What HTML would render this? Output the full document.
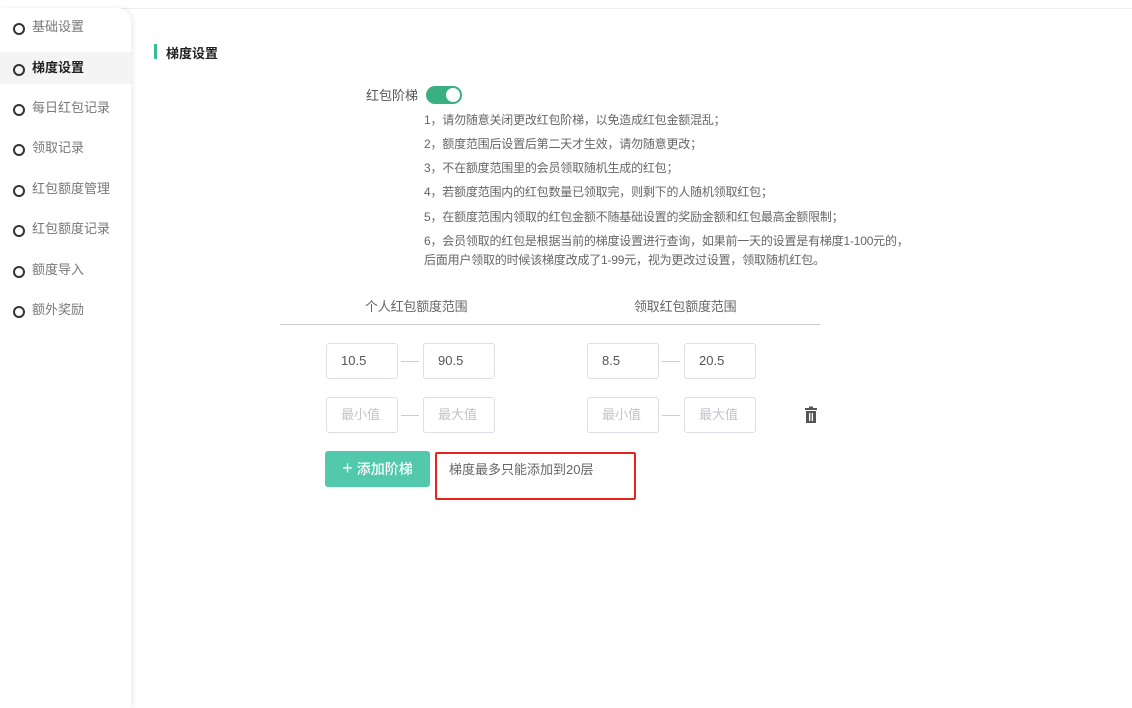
<!DOCTYPE html>
<html><head><meta charset="utf-8"><style>
*{margin:0;padding:0;box-sizing:border-box}
body{width:1132px;height:708px;background:#fff;font-family:"Liberation Sans","Noto Sans CJK SC",sans-serif;position:relative;overflow:hidden;color:#666}
.top{position:absolute;left:0;top:8px;width:1132px;height:1px;background:#eee}
.side{position:absolute;left:0;top:8px;width:131px;height:700px;background:#fff;border-top-right-radius:14px;box-shadow:2px 0 6px rgba(0,0,0,.08)}
.it{position:absolute;left:0;width:131px;height:32px;line-height:32px;font-size:13px;color:#777;padding-left:32px}
.it::before{content:"";position:absolute;left:13px;top:12px;width:8px;height:8px;border:2px solid #333;border-radius:50%}
.it.act{background:#f4f4f4;color:#222;font-weight:bold}
.abs{position:absolute}
.t{position:absolute;font-size:12px;color:#666;white-space:nowrap;letter-spacing:-0.2px}
.inp{position:absolute;width:72px;height:36px;border:1px solid #dcdfe6;border-radius:3px;font-size:13px;color:#555;line-height:34px;padding-left:14px}
.ph{color:#c0c4cc}
.dash{position:absolute;width:18px;height:1px;background:#ccc}
</style></head><body>
<div class="top"></div>
<div class="side">
<div class="it" style="top:3px">基础设置</div>
<div class="it act" style="top:44px">梯度设置</div>
<div class="it" style="top:84px">每日红包记录</div>
<div class="it" style="top:124px">领取记录</div>
<div class="it" style="top:165px">红包额度管理</div>
<div class="it" style="top:205px">红包额度记录</div>
<div class="it" style="top:246px">额度导入</div>
<div class="it" style="top:286px">额外奖励</div>
</div>
<div class="abs" style="left:154px;top:44px;width:3px;height:15px;background:#3dbb96"></div>
<div class="abs" style="left:166px;top:43px;font-size:13px;font-weight:bold;color:#222">梯度设置</div>
<div class="abs" style="left:366px;top:85px;font-size:13px;color:#555">红包阶梯</div>
<div class="abs" style="left:426px;top:86px;width:36px;height:18px;border-radius:9px;background:#3aaf7f"><div style="position:absolute;right:2px;top:2px;width:14px;height:14px;border-radius:50%;background:#fff"></div></div>
<div class="t" style="left:424px;top:111px">1，请勿随意关闭更改红包阶梯，以免造成红包金额混乱；</div>
<div class="t" style="left:424px;top:135px">2，额度范围后设置后第二天才生效，请勿随意更改；</div>
<div class="t" style="left:424px;top:159px">3，不在额度范围里的会员领取随机生成的红包；</div>
<div class="t" style="left:424px;top:183px">4，若额度范围内的红包数量已领取完，则剩下的人随机领取红包；</div>
<div class="t" style="left:424px;top:208px">5，在额度范围内领取的红包金额不随基础设置的奖励金额和红包最高金额限制；</div>
<div class="t" style="left:424px;top:232px">6，会员领取的红包是根据当前的梯度设置进行查询，如果前一天的设置是有梯度1-100元的，</div>
<div class="t" style="left:424px;top:251px">后面用户领取的时候该梯度改成了1-99元，视为更改过设置，领取随机红包。</div>
<div class="t" style="left:365px;top:296px;font-size:13px">个人红包额度范围</div>
<div class="t" style="left:634px;top:296px;font-size:13px">领取红包额度范围</div>
<div class="abs" style="left:280px;top:324px;width:540px;height:1px;background:#ccc"></div>
<div class="inp" style="left:326px;top:343px">10.5</div><div class="dash" style="left:401px;top:361px"></div><div class="inp" style="left:423px;top:343px">90.5</div>
<div class="inp" style="left:587px;top:343px">8.5</div><div class="dash" style="left:662px;top:361px"></div><div class="inp" style="left:684px;top:343px">20.5</div>
<div class="inp ph" style="left:326px;top:397px">最小值</div><div class="dash" style="left:401px;top:415px"></div><div class="inp ph" style="left:423px;top:397px">最大值</div>
<div class="inp ph" style="left:587px;top:397px">最小值</div><div class="dash" style="left:662px;top:415px"></div><div class="inp ph" style="left:684px;top:397px">最大值</div>
<svg class="abs" style="left:803px;top:406px" width="16" height="18" viewBox="0 0 16 18"><rect x="2" y="2" width="12" height="2" fill="#555"/><rect x="6" y="0.5" width="4" height="2" fill="#555"/><path d="M3 5h10v12H3z" fill="#555"/><rect x="6" y="7" width="1.3" height="8" fill="#fff"/><rect x="8.7" y="7" width="1.3" height="8" fill="#fff"/></svg>
<div class="abs" style="left:325px;top:451px;width:105px;height:36px;background:#52c8ad;border-radius:3px;color:#fff;font-size:14px;font-weight:500;line-height:34px;text-align:center"><span style="font-size:18px">+</span> 添加阶梯</div>
<div class="abs" style="left:435px;top:452px;width:201px;height:48px;border:2px solid #e8231c;border-radius:2px;font-size:13px;color:#666;padding:5px 12px">梯度最多只能添加到20层</div>
</body></html>
